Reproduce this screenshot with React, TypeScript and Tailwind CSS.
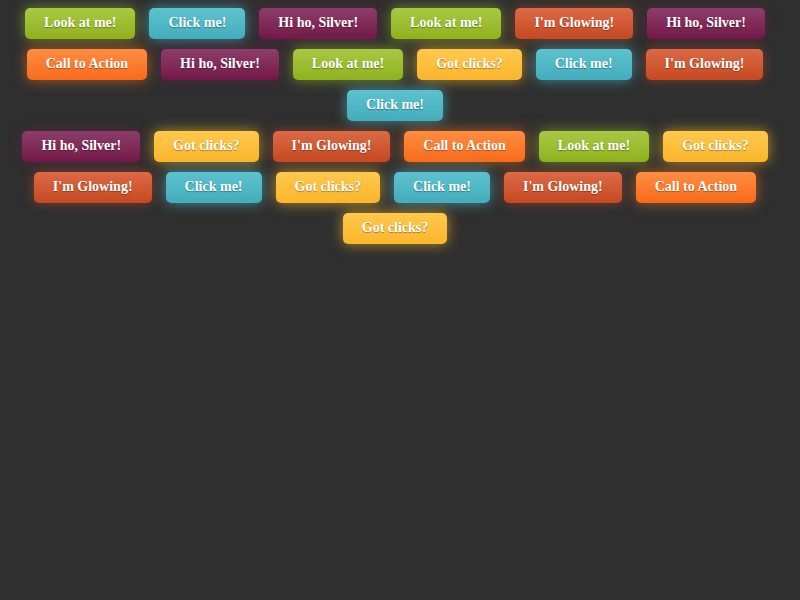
import React from 'react';

type Tone = 'green' | 'cyan' | 'purple' | 'red' | 'orange' | 'yellow';

const tones: Record<Tone, string> = {
  green: 'bg-gradient-to-b from-[#a9c843] to-[#90b21a] shadow-[0_0_14px_rgba(160,196,40,0.6)]',
  cyan: 'bg-gradient-to-b from-[#5dc2cf] to-[#43adbd] shadow-[0_0_14px_rgba(80,190,210,0.65)]',
  purple: 'bg-gradient-to-b from-[#8d3d69] to-[#731848] shadow-[0_0_12px_rgba(120,30,80,0.5)]',
  red: 'bg-gradient-to-b from-[#db6a45] to-[#c64820] shadow-[0_0_12px_rgba(210,80,40,0.5)]',
  orange: 'bg-gradient-to-b from-[#ff8d40] to-[#f86a18] shadow-[0_0_14px_rgba(255,120,30,0.6)]',
  yellow: 'bg-gradient-to-b from-[#ffc84c] to-[#fbb62a] shadow-[0_0_14px_rgba(255,190,40,0.65)]',
};

const labels: Record<Tone, string> = {
  green: 'Look at me!',
  cyan: 'Click me!',
  purple: 'Hi ho, Silver!',
  red: "I'm Glowing!",
  orange: 'Call to Action',
  yellow: 'Got clicks?',
};

// two batches of 13, each wraps on its own
const groups: Tone[][] = [
  ['green', 'cyan', 'purple', 'green', 'red', 'purple', 'orange', 'purple', 'green', 'yellow', 'cyan', 'red', 'cyan'],
  ['purple', 'yellow', 'red', 'orange', 'green', 'yellow', 'red', 'cyan', 'yellow', 'cyan', 'red', 'orange', 'yellow'],
];

function GlowButton({ tone }: { tone: Tone }) {
  return (
    <button
      className={`h-[31px] px-[19px] pb-[2px] rounded-[5px] text-white font-bold text-[14px] [text-shadow:0_1px_1px_rgba(0,0,0,0.35)] ${tones[tone]}`}
      style={{ fontFamily: '"Liberation Serif", "Times New Roman", serif' }}
    >
      {labels[tone]}
    </button>
  );
}

export default function App() {
  return (
    <div className="min-h-[600px] w-[800px] bg-[#2f2f2f] pt-[8px] pr-[10px] flex flex-col gap-y-[10px]">
      {groups.map((group, gi) => (
        <div key={gi} className="flex flex-wrap justify-center gap-x-[14px] gap-y-[10px]">
          {group.map((tone, i) => (
            <GlowButton key={i} tone={tone} />
          ))}
        </div>
      ))}
    </div>
  );
}
